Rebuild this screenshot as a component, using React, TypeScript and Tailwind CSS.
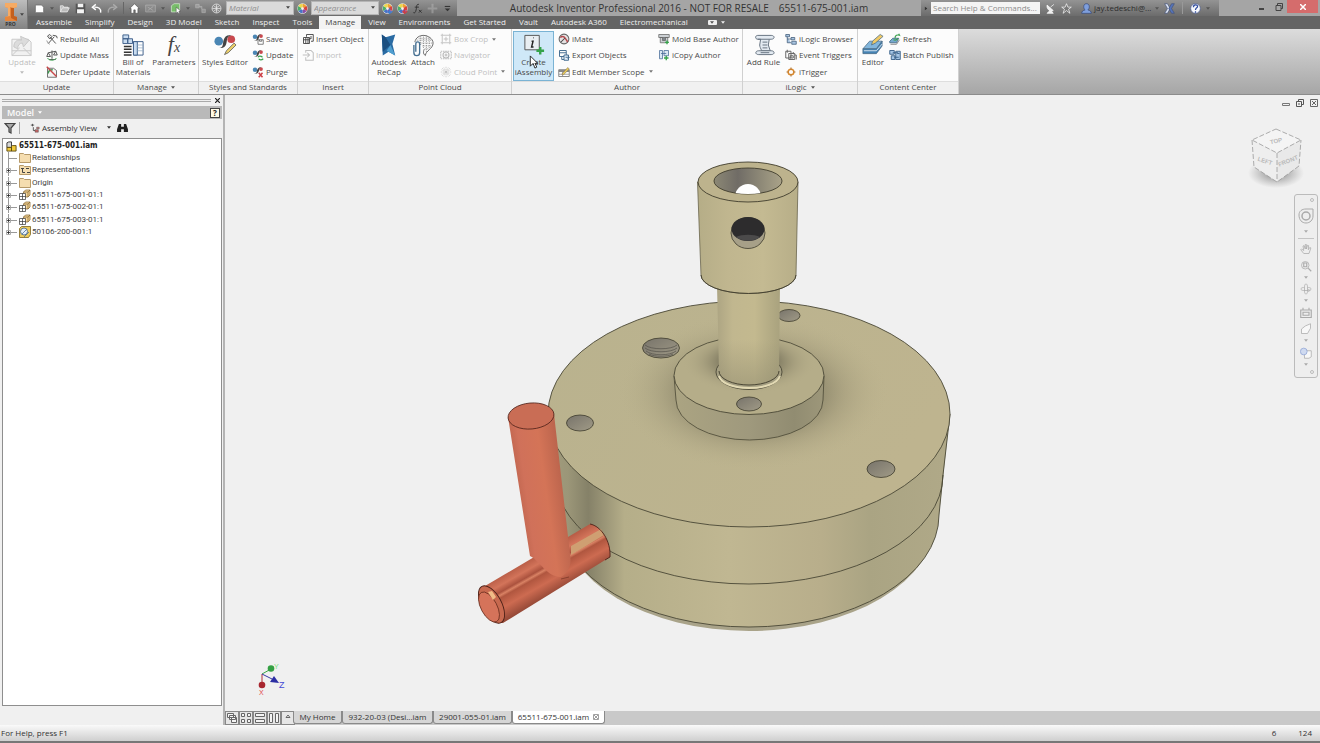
import type { ReactNode } from "react";
import clsx from "clsx";

const icons: Record<string, ReactNode> = {
  updateBig: (
    <g fill="#f1f1f1" stroke="#c8c8c8">
      <path d="M2 6h17l3 3v14H2z" />
      <path d="M2 18h20M2 23l8-8M22 23l-8-8" />
      <path d="M4 14c0-6 4-8 8-7l-1-4 9 4-6 7-1-4c-3 0-5 2-5 6z" fill="#dcdcdc" />
    </g>
  ),
  bom: (
    <g stroke="#3f5f8a" fill="#c9dcf0">
      <path d="M2 1.500h6v4H2zM2 5.500h5v5H2zM7 5.500h5v5H7z" />
      <path d="M13 8.500h10v14H13z" fill="#fff" />
      <path d="M13 8.500h4v14h-4z" />
      <path d="M3 13.500h8M3 16.500h8M3 19.500h8M3 22.500h8" stroke="#333" strokeWidth="1.500" />
      <path d="M17 12h6M17 15h6M17 18h6" stroke="#8aa5c0" strokeWidth=".7" />
    </g>
  ),
  styles: (
    <g>
      <circle cx="6" cy="8" r="4.500" fill="#4a86b4" />
      <circle cx="19" cy="6" r="4" fill="#c8494e" />
      <path d="M5 15c6 1 5-4 6-8s4-6 8-5c-5 1-4 4-5 8s-3 6-9 5z" fill="#444" />
      <path d="M12 22l2-4 8-8 2 2-8 8z" fill="#ecd06a" stroke="#555" strokeWidth=".8" />
    </g>
  ),
  recap: (
    <g>
      <path d="M5 1l4 3 10-3-3 10 3 12-7-4-6 4z" fill="#2a6ba3" />
      <path d="M5 1l4 3 5 8-8 7z" fill="#1b4f80" />
      <path d="M10 18l4-6 5 11z" fill="#4f9fd0" />
    </g>
  ),
  attach: (
    <g fill="none" stroke="#666">
      <path d="M4 9c1-5 5-7 9-7s10 3 10 8c0 6-8 8-8 13-3-2-2-5-1-7" />
      <path d="M6 7h16M8 5h12M9 10h13M12 13h9M15 16h4M10 3v9M13 2v14M16 2v17M19 4v12" strokeWidth=".7" strokeDasharray="1 1" />
      <path d="M3 12v8c0 4 6 4 6 0v-9c0-3-4-3-4 0v8" stroke="#456f91" strokeWidth="1.400" />
    </g>
  ),
  iassembly: (
    <g>
      <path d="M3 2h15v15H3z" fill="#e9eef2" stroke="#555" />
      <path d="M11.500 4.500h.5M10 8h1.500l-1.500 6h2" stroke="#222" strokeWidth="1.500" fill="none" />
      <path d="M19 14v8M15 18h8" stroke="#35a34a" strokeWidth="2.500" />
    </g>
  ),
  rule: (
    <g fill="#e3eaf1" stroke="#64717e">
      <path d="M6 2h14c4 0 4 4 0 4h-2l-1 6 2 6h-9c-1-3-2-4-2-6l1-6H6C3 6 3 2 6 2z" />
      <path d="M7 18h13c4 0 4 4 0 4H7c-4 0-4-4 0-4z" />
      <path d="M6 6h12M11 9h5M11 12h5M11 15h5M9 20h9" fill="none" />
    </g>
  ),
  editor: (
    <g stroke="#4c6c86" strokeWidth=".8">
      <path d="M2 16L9 8h13l-6 8z" fill="#83b6dc" />
      <path d="M2 16v5h14l6-8V8l-6 8z" fill="#4583b4" />
      <path d="M3 18h13l6-7" stroke="#fff" fill="none" />
      <path d="M11 12l1-4 8-7 3 2-8 7z" fill="#f0c964" />
    </g>
  ),
  rebuild: (
    <g fill="none" stroke="#555" strokeWidth="1.300">
      <path d="M3 14l8-9M13 14L5 5M2 4l3-2 3 3-3 3zM9 3l5 1 1 3" />
      <path d="M1 10a7 7 0 0 0 4 5" stroke="#999" />
    </g>
  ),
  mass: (
    <g fill="none" stroke="#555" strokeWidth="1.300">
      <path d="M8 2v11M3 5l10-2M1 10l2-5 3 5zM10 8l3-5 2 5zM4 14h9" />
      <path d="M2 12c2 4 9 4 12 0" stroke="#49a55a" />
    </g>
  ),
  defer: (
    <g fill="none" stroke="#666" strokeWidth="1.200">
      <path d="M2 3h8l4 3v9H2z" fill="#f4f4f4" />
      <path d="M3 10c0-4 3-5 6-5" stroke="#3e9a50" strokeWidth="1.800" />
      <path d="M1 1l13 13" stroke="#c9474a" strokeWidth="1.800" />
    </g>
  ),
  insert: <path d="M6 5V2h9v9h-3M2 6h8v8H2zM2 9h8M5 6v8M8 6v8M12 4v4l-2-1" fill="none" stroke="#444" strokeWidth="1.200" />,
  import: <path d="M5 5V2h7l3 3v10H5v-4M1 8h8M7 5l3 3-3 3" fill="none" stroke="#c0c0c0" strokeWidth="1.400" />,
  box: <path d="M3 3h10v10H3zM1 3h2V1M15 3h-2V1M3 15v-2H1M13 15v-2h2M8 5v6M5 8h6" fill="none" stroke="#c4c4c4" strokeWidth="1.300" />,
  navigator: (
    <g fill="none" stroke="#bbb" strokeWidth="1.500">
      <path d="M1 3h14v10H1z" strokeDasharray="2 1" />
      <circle cx="8" cy="8" r="4" />
      <path d="M8 6v4M6 8h4" />
    </g>
  ),
  cloud: <path d="M8 1v14M1 8h14M3 3l10 10M13 3L3 13M2 5l12 6M5 2l6 12M11 2L5 14M14 5L2 11" stroke="#c0c0c0" strokeDasharray="1.500 1" />,
  imate: (
    <g fill="none">
      <circle cx="8" cy="8" r="6.500" fill="#e5e2e2" stroke="#666" strokeWidth="1.400" />
      <path d="M3 6c5-4 7 2 10 6" stroke="#b5494e" strokeWidth="2" />
      <path d="M4 12l5-5" stroke="#444" strokeWidth="1.400" />
    </g>
  ),
  exportObj: (
    <g fill="none" stroke="#456d91" strokeWidth="1.300">
      <path d="M2 2h9v8H2zM2 5h9M5 10v4h4" />
      <path d="M8 8h6v7H8z" fill="#e6f0fa" />
      <path d="M10 11h5M13 9l2 2-2 2" />
    </g>
  ),
  scope: (
    <g>
      <path d="M1 5h14v9H1z" fill="#fff" stroke="#666" />
      <path d="M1 5h14v3H1z" fill="#888" />
      <path d="M1 11h14M6 8v6" stroke="#888" />
      <path d="M5 11l8-9 2 2-8 8z" fill="#edcf55" stroke="#765" strokeWidth=".7" />
    </g>
  ),
  mold: (
    <g fill="#ccd0d4" stroke="#666">
      <path d="M1 2h14v4H1zM3 6h10v7H3z" />
      <path d="M6 6v4h4V6" fill="#80868c" />
      <path d="M12 10v5M9.500 12.500h5" stroke="#35a34a" strokeWidth="1.800" />
    </g>
  ),
  icopy: (
    <g fill="#dbe8f5" stroke="#456996">
      <path d="M2 2h4v11H2zM8 2h6v7H8zM4 6h7" />
      <path d="M11 9v6M8 12h6" stroke="#35a34a" strokeWidth="1.800" />
    </g>
  ),
  browser: (
    <g fill="#a9c5e1" stroke="#3f5875">
      <path d="M1 2h5v3H1zM3 5v8h5M3 8h5" />
      <path d="M8 6h5v3H8zM9 11h6v4H9z" />
    </g>
  ),
  event: <path d="M1 3h7v9H1zM5 6h8v8H5zM3 1v4M11 4v3M7 9h4v3H7zM13 8h2v6" fill="none" stroke="#666" strokeWidth="1.300" />,
  trigger: (
    <g fill="none" stroke="#dc8a2e">
      <circle cx="8" cy="8" r="3.800" strokeWidth="2" />
      <path d="M8 2v3M8 11v3M2 8h3M11 8h3" stroke="#b07a3c" strokeWidth="1.500" />
    </g>
  ),
  refresh: (
    <g>
      <path d="M1 11l4-4h8l-3 6H1z" fill="#77a9ce" stroke="#3c617f" />
      <path d="M2 15h8l4-6" fill="none" stroke="#666" />
      <path d="M8 7c0-4 3-5 6-4l-1-2M6 9c3 1 5 0 6-2" fill="none" stroke="#39a04c" strokeWidth="1.500" />
    </g>
  ),
  batch: (
    <g fill="#a6c6e5" stroke="#375d86" strokeWidth="1.200">
      <path d="M1 2h6v5H1zM3 9h5v5H3zM9 3h6v11H9z" />
      <path d="M5 5h7M7 11h6M11 6h3" />
    </g>
  ),
};

const styleDots = (
  <g>
    <circle cx="4" cy="5" r="3" fill="#4a86b4" />
    <circle cx="12" cy="4" r="2.500" fill="#c8494e" />
    <path d="M3 10c4 0 3-3 4-5s3-4 5-3c-3 1-2 3-3 5s-2 4-6 3z" fill="#444" />
  </g>
);
icons.save = <g>{styleDots}<path d="M8 9h7v6H8zM10 9v2h3V9" fill="#fff" stroke="#555" /></g>;
icons.update = <g>{styleDots}<path d="M8 11c1-2 4-2 6 0M15 13c-2 2-5 2-6 0" fill="none" stroke="#36a04a" strokeWidth="1.500" /></g>;
icons.purge = <g>{styleDots}<path d="M9 9l5 6M14 9l-5 6" stroke="#cc3f46" strokeWidth="2" /></g>;

function Icon({ name, big }: { name: string; big?: boolean }) {
  return (
    <svg viewBox={big ? "0 0 25 24" : "0 0 16 16"} className={clsx("shrink-0", big ? "h-6 w-6" : "size-3")} aria-hidden="true">
      {icons[name]}
    </svg>
  );
}

function Caret({ className = "text-[#555]" }: { className?: string }) {
  return (
    <svg viewBox="0 0 6 4" className={clsx("h-[3px] w-1 shrink-0", className)} aria-hidden="true">
      <path d="M0 0h6L3 4z" fill="currentColor" />
    </svg>
  );
}

function BigButton({ icon, lines, className, children }: { icon?: string; lines: string[]; className: string; children?: ReactNode }) {
  return (
    <button className={clsx("flex h-[50px] shrink-0 flex-col items-center pt-0.5 leading-[10px] whitespace-nowrap", className)}>
      {icon ? <Icon name={icon} big /> : children}
      {lines.map((line) => (
        <span key={line}>{line}</span>
      ))}
      {icon === "updateBig" && <Caret className="mt-1 text-[#bbb]" />}
    </button>
  );
}

type Small = { icon: string; label: string; off?: boolean; menu?: boolean };

function SmallColumn({ items, className }: { items: Small[]; className?: string }) {
  return (
    <div className={clsx("grid h-[50px] shrink-0 grid-rows-3 items-center pb-px", className)}>
      {items.map((it) => (
        <button key={it.label} disabled={it.off} className={clsx("flex items-center gap-0.5 whitespace-nowrap", it.off && "text-[#c0c0c0]")}>
          <Icon name={it.icon} />
          {it.label}
          {it.menu && <Caret className="ml-0.5 text-[#777]" />}
        </button>
      ))}
    </div>
  );
}

function Panel({ title, menu, className, children }: { title: string; menu?: boolean; className: string; children: ReactNode }) {
  return (
    <section className={clsx("flex shrink-0 flex-col border-r border-[#d0d0d0] bg-[#fcfcfc]", className)}>
      <div className="flex h-[52px] pt-[2px]">{children}</div>
      <h2 className="flex h-[13px] items-center justify-center gap-1 border-t border-[#dedede] bg-[#f1f1f1] pb-0.5">
        {title}
        {menu && <Caret />}
      </h2>
    </section>
  );
}

function Ribbon() {
  return (
    <div className="flex h-[66px] shrink-0 overflow-hidden border-b border-[#8c8c8c] bg-linear-to-b from-[#dcdcdc] to-[#a6a6a6] text-[8px] text-[#4a4a4a]">
      <Panel title="Update" className="w-[114px]">
        <BigButton icon="updateBig" lines={["Update"]} className="w-11 text-[#bdbdbd]" />
        <SmallColumn items={[{ icon: "rebuild", label: "Rebuild All" }, { icon: "mass", label: "Update Mass" }, { icon: "defer", label: "Defer Update" }]} className="pl-0.5" />
      </Panel>
      <Panel title="Manage" menu className="w-[85px]">
        <BigButton icon="bom" lines={["Bill of", "Materials"]} className="w-[38px]" />
        <BigButton lines={["Parameters"]} className="w-[44px]">
          <span className="flex h-6 w-6 items-start justify-center font-['Liberation_Serif',serif] text-[22px] leading-[22px] text-[#444] italic" aria-hidden="true">
            <span>f</span>
            <span className="pt-2 text-[14px] leading-[14px]">x</span>
          </span>
        </BigButton>
      </Panel>
      <Panel title="Styles and Standards" className="w-[99px]">
        <BigButton icon="styles" lines={["Styles Editor"]} className="w-[52px]" />
        <SmallColumn items={[{ icon: "save", label: "Save" }, { icon: "update", label: "Update" }, { icon: "purge", label: "Purge" }]} className="pl-px" />
      </Panel>
      <Panel title="Insert" className="w-[71px]">
        <SmallColumn items={[{ icon: "insert", label: "Insert Object" }, { icon: "import", label: "Import", off: true }]} className="pl-1" />
      </Panel>
      <Panel title="Point Cloud" className="w-[143px]">
        <BigButton icon="recap" lines={["Autodesk", "ReCap"]} className="w-10" />
        <BigButton icon="attach" lines={["Attach"]} className="w-7" />
        <SmallColumn
          items={[{ icon: "box", label: "Box Crop", off: true, menu: true }, { icon: "navigator", label: "Navigator", off: true }, { icon: "cloud", label: "Cloud Point", off: true, menu: true }]}
          className="pl-[3px]"
        />
      </Panel>
      <Panel title="Author" className="w-[231px]">
        <div className="relative ml-px">
          <BigButton icon="iassembly" lines={["Create", "iAssembly"]} className="w-[41px] bg-[#cfe8f8] ring-1 ring-[#7ab3d4] ring-inset" />
          {/* pointer resting on the hovered button */}
          <svg viewBox="0 0 10 15" className="absolute top-6 left-4 h-3.5 w-2.5" aria-hidden="true">
            <path d="M1 1v11l3-3 2 5 2-1-2-4h3z" fill="#fff" stroke="#222" />
          </svg>
        </div>
        <SmallColumn items={[{ icon: "imate", label: "iMate" }, { icon: "exportObj", label: "Export Objects" }, { icon: "scope", label: "Edit Member Scope", menu: true }]} className="w-[103px] pl-1" />
        <SmallColumn items={[{ icon: "mold", label: "Mold Base Author" }, { icon: "icopy", label: "iCopy Author" }]} className="pl-px" />
      </Panel>
      <Panel title="iLogic" menu className="w-[115px]">
        <BigButton icon="rule" lines={["Add Rule"]} className="w-[41px]" />
        <SmallColumn items={[{ icon: "browser", label: "iLogic Browser" }, { icon: "event", label: "Event Triggers" }, { icon: "trigger", label: "iTrigger" }]} className="pl-px" />
      </Panel>
      <Panel title="Content Center" className="w-[101px]">
        <BigButton icon="editor" lines={["Editor"]} className="w-[30px]" />
        <SmallColumn items={[{ icon: "refresh", label: "Refresh" }, { icon: "batch", label: "Batch Publish" }]} className="pl-px" />
      </Panel>
    </div>
  );
}

function Quick({ label, children, dim }: { label: string; children: ReactNode; dim?: boolean }) {
  return (
    <button aria-label={label} className={clsx("shrink-0", dim && "opacity-45")}>
      <svg viewBox="0 0 16 16" className="size-[11px]" aria-hidden="true">{children}</svg>
    </button>
  );
}

function Wheel({ badge }: { badge?: string }) {
  return (
    <g>
      <circle cx="8" cy="8" r="7.500" fill="#eee" />
      <path d="M8 8V1a7 7 0 0 1 6 4z" fill="#f0a030" />
      <path d="M8 8l6-3.500a7 7 0 0 1 0 7z" fill="#d8433e" />
      <path d="M8 8l6 3.500A7 7 0 0 1 8 15z" fill="#8a4fa8" />
      <path d="M8 8v7a7 7 0 0 1-6-3.500z" fill="#4774c8" />
      <path d="M8 8l-6 3.500a7 7 0 0 1 0-7z" fill="#4cae6b" />
      <path d="M8 8L2 4.500A7 7 0 0 1 8 1z" fill="#ecd84d" />
      <circle cx="8" cy="8" r="2" fill="#f6f0f0" />
      {badge && <path d="M11 8v7M8 12l3 3 4-3" stroke={badge} strokeWidth="2" fill="none" />}
    </g>
  );
}

function Combo({ label }: { label: string }) {
  return (
    <div className="relative shrink-0">
      <select aria-label={label} className="block h-[14px] w-[68px] appearance-none border border-[#b5b5b5] bg-[#dadada] px-0.5 text-[8px] leading-3 text-[#8d8d8d] italic">
        <option>{label}</option>
      </select>
      <Caret className="pointer-events-none absolute top-[5px] right-1 text-[#444]" />
    </div>
  );
}

const tabs = ["Assemble", "Simplify", "Design", "3D Model", "Sketch", "Inspect", "Tools", "Manage", "View", "Environments", "Get Started", "Vault", "Autodesk A360", "Electromechanical"];

function Header() {
  return (
    <header className="flex h-[29px] shrink-0">
      <button aria-label="Application menu" className="flex w-7 shrink-0 items-center justify-center border-r border-[#777] bg-linear-to-b from-[#bdbdbd] to-[#838383]">
        <span className="flex flex-col items-center">
          <svg viewBox="0 0 12 18" className="h-[18px] w-3.5" aria-hidden="true">
            <path d="M0 0h12v4L9 5v8l3 1v4H0v-4l3-1V5L0 4z" fill="#e8863a" />
            <path d="M0 0h12v4L9 5 5 4v9l-5 1 3-1V5L0 4z" fill="#f5ab65" />
            <path d="M6 5h3v8l3 1v4l-6-3z" fill="#c4601e" />
          </svg>
          <span className="text-[5px] leading-[6px] font-bold text-[#333]">PRO</span>
        </span>
        <Caret className="ml-0.5 text-[#444]" />
      </button>
      <div className="flex min-w-0 flex-1 flex-col">
        <div className="flex h-4 shrink-0 items-center bg-[#a5a5a5]">
          <div className="flex h-4 w-[429px] shrink-0 items-center bg-linear-to-b from-[#949494] to-[#6c6c6c] pl-1.5">
            <div className="flex w-[188px] shrink-0 items-center justify-between">
              <Quick label="New"><path d="M2 3h9l3 3v8H2z" fill="#fff" stroke="#666" /></Quick>
              <Caret />
              <Quick label="Open"><path d="M2 13V4h4l1 2h6v2M2 13l3-6h10l-3 6z" fill="#bbb" stroke="#f2f2f2" /></Quick>
              <Quick label="Save"><path d="M1 1h14v14H1z" fill="#555" /><path d="M4 1h8v5H4zM3 9h10v6H3z" fill="#f4f4f4" /></Quick>
              <Quick label="Undo"><path d="M14 14c1-6-3-8-9-8M7 2L2 6l5 4" stroke="#fff" strokeWidth="2" fill="none" /></Quick>
              <Quick label="Redo" dim><path d="M2 14c-1-6 3-8 9-8M9 2l5 4-5 4" stroke="#ddd" strokeWidth="2" fill="none" /></Quick>
              <span className="h-3 w-px bg-[#666]" />
              <Quick label="Home"><path d="M1 8l7-7 7 7h-2v7h-4v-5H7v5H3V8z" fill="#fff" stroke="#555" /></Quick>
              <Quick label="Team Web" dim><path d="M1 3h14v10H1zM4 6l8 5M12 5l-8 6" stroke="#eee" fill="#999" /></Quick>
              <Caret />
              <Quick label="Select"><path d="M2 4l4-3h8v9l-3 3H2z" fill="#78bd6a" stroke="#d9efd5" /><path d="M9 6v9l2-2 2 3 1-1-1-3h3z" fill="#fff" stroke="#444" strokeWidth=".7" /></Quick>
              <Caret />
              <Quick label="Parts" dim><path d="M1 2h5v5H1zM10 9h5v5h-5zM6 5h4v4" fill="#bbb" stroke="#eee" /></Quick>
              <Quick label="Globe"><circle cx="8" cy="8" r="6.500" fill="#8a8a8a" stroke="#eee" /><path d="M2 8h12M8 2v12M4 4c3 3 5 3 8 0M4 12c3-3 5-3 8 0" stroke="#eee" fill="none" /></Quick>
            </div>
            <div className="ml-1 flex flex-1 items-center gap-[3px]">
              <Combo label="Material" />
              <Quick label="Appearance browser"><Wheel /></Quick>
              <Combo label="Appearance" />
              <div className="flex flex-1 items-center justify-between pr-1">
                <Quick label="Adjust"><Wheel badge="#3f7fd0" /></Quick>
                <Quick label="Clear"><Wheel badge="#cc3f46" /></Quick>
                <Quick label="Formula"><path d="M10 2C6 1 7 6 6 10s-2 5-4 4M4 6h6M10 10l4 4M14 10l-4 4" stroke="#333" strokeWidth="1.400" fill="none" /></Quick>
                <Quick label="Measure" dim><path d="M8 1v14M1 8h14" stroke="#bbb" strokeWidth="3" /></Quick>
                <Quick label="Customize"><path d="M4 5h8" stroke="#333" strokeWidth="1.500" /><path d="M4 8h8l-4 4z" fill="#333" /></Quick>
              </div>
            </div>
          </div>
          <h1 className="flex min-w-0 flex-1 justify-center gap-2.5 overflow-hidden text-[10px] leading-4 whitespace-nowrap text-[#333]">
            <span>Autodesk Inventor Professional 2016 - NOT FOR RESALE</span>
            <span>65511-675-001.iam</span>
          </h1>
          <div className="flex h-4 w-[298px] shrink-0 items-center gap-[5px] bg-linear-to-b from-[#949494] to-[#6c6c6c] pl-[3px]">
            <Caret className="-rotate-90 text-[#333]" />
            <input aria-label="Search Help & Commands" placeholder="Search Help & Commands..." className="-ml-0.5 h-3 w-[109px] bg-[#f4f4f4] px-0.5 text-[8px] text-[#555] placeholder:text-[#8d8d8d]" />
            <Quick label="Search"><path d="M3 15h9l-4-5zM3 3l9 8C6 13 2 8 3 3zM8 6l5-4" fill="#eee" stroke="#fff" /></Quick>
            <Quick label="Favorites"><path d="M8 1l2 5h5l-4 3 2 6-5-4-5 4 2-6-4-3h5z" fill="#777" stroke="#fff" /></Quick>
            <button className="ml-1 flex items-center gap-0.5 text-[8px] whitespace-nowrap text-[#2d2d2d]">
              <svg viewBox="0 0 16 16" className="size-[11px]" aria-hidden="true"><path d="M8 1c5 0 5 7 2 9 3 1 5 2 5 5H1c0-3 2-4 5-5C3 8 3 1 8 1z" fill="#7f9fdc" stroke="#33477c" /></svg>
              jay.tedeschi@...
              <Caret className="ml-0.5 text-[#555]" />
            </button>
            <Quick label="Exchange Apps"><path d="M1 1h4l4 7-4 7H1l4-7z" fill="#dbe3f2" stroke="#46547c" /><path d="M15 1h-4L7 8l4 7h4l-4-7z" fill="#5674ba" stroke="#46547c" /></Quick>
            <span className="mx-0.5 h-3 w-px bg-[#999]" />
            <Quick label="Help"><circle cx="8" cy="8" r="7" fill="#f6f8fc" stroke="#4d5f94" /><path d="M5 6c0-4 6-4 6-1 0 2-3 2-3 5M8 12v2" stroke="#2f4a9c" strokeWidth="1.800" fill="none" /></Quick>
            <Caret />
          </div>
          <div className="flex h-4 w-[101px] shrink-0 items-start justify-end pr-0.5">
            <button aria-label="Minimize" className="h-4 w-[17px]"><span className="mx-auto mt-0.5 block h-0.5 w-[5px] bg-[#444]" /></button>
            <button aria-label="Restore" className="flex h-[13px] w-[17px] items-center justify-center">
              <svg viewBox="0 0 8 8" className="size-2" aria-hidden="true"><path d="M1 2.500h5v5H1zM2.500 2V.5h5v5H6" fill="none" stroke="#444" /></svg>
            </button>
            <button aria-label="Close" className="flex h-[13px] w-[31px] items-center justify-center bg-[#d56c6c]">
              <svg viewBox="0 0 6 6" className="size-1.5" aria-hidden="true"><path d="M0 0l6 6M6 0L0 6" stroke="#fff" strokeWidth="1.500" /></svg>
            </button>
          </div>
        </div>
        <nav className="flex h-[13px] items-stretch gap-px bg-[#646464] pl-0.5 text-[8px] leading-3 text-[#efefef]">
          {tabs.map((tab) => (
            <button key={tab} className={clsx("px-1.5 pb-px whitespace-nowrap", tab === "Manage" && "bg-[#f3f3f3] text-[#444]")}>{tab}</button>
          ))}
          <button aria-label="Ribbon display" className="ml-[13px] flex items-center gap-1">
            <span className="flex h-[5px] w-[9px] items-center justify-center rounded-[1px] bg-[#eee]"><Caret className="text-[#555]" /></span>
            <Caret className="text-[#eee]" />
          </button>
        </nav>
      </div>
    </header>
  );
}

const nodes = [
  { label: "Relationships", kind: "folder", leaf: true },
  { label: "Representations", kind: "reps" },
  { label: "Origin", kind: "folder" },
  { label: "65511-675-001-01:1", kind: "part" },
  { label: "65511-675-002-01:1", kind: "part" },
  { label: "65511-675-003-01:1", kind: "part" },
  { label: "50106-200-001:1", kind: "sub" },
];

function NodeIcon({ kind }: { kind: string }) {
  return (
    <svg viewBox="0 0 12 12" className="size-3 shrink-0" aria-hidden="true">
      {(kind === "folder" || kind === "reps") && <path d="M.5 1.500h4l1 1h6v8H.5z" fill="#f5ddb0" stroke="#b79a6a" />}
      {kind === "reps" && <path d="M2 4.500h3M3.500 4.500v4H6M7 4.500h3M8 8.500h3" stroke="#444" fill="none" />}
      {kind === "part" && (
        <g strokeWidth=".7">
          <path d="M4.500 3l2-2H11v5L9 8H4.500z" fill="#f6d79a" stroke="#7d5d2a" />
          <path d="M4.500 3H9l2-2M9 3v5" fill="none" stroke="#7d5d2a" />
          <path d="M.5 4.500h6v6h-6z" fill="#fff" stroke="#333" />
          <path d="M3.500 4.500v6M.5 7.500h6" stroke="#333" />
        </g>
      )}
      {kind === "sub" && (
        <g strokeWidth=".8">
          <path d="M.5 2.500l2-2h9v8l-2 3h-9z" fill="#f0cd5c" stroke="#7a6321" />
          <circle cx="5" cy="5.500" r="3.500" fill="#e6eff8" stroke="#3e5f86" />
          <path d="M3 8l5-5M5 11l5-5" stroke="#4a6e98" />
        </g>
      )}
    </svg>
  );
}

function ModelBrowser() {
  return (
    <aside className="flex w-[225px] shrink-0 flex-col border-r-2 border-[#b4b4b4] bg-[#f0f0f0] pt-0.5 pr-px pl-0.5">
      <div className="flex h-[9px] shrink-0 items-start gap-1 pt-px pr-0.5">
        <span className="mt-px h-[3px] flex-1 border-y border-[#aaa]" />
        <button aria-label="Close panel">
          <svg viewBox="0 0 5 5" className="block size-[5px]" aria-hidden="true"><path d="M0 0l5 5M5 0L0 5" stroke="#222" strokeWidth="1.200" /></svg>
        </button>
      </div>
      <div className="flex h-[13px] shrink-0 items-center justify-between bg-[#b9b9b9] pr-0.5 pl-[5px]">
        <h2 className="flex items-center gap-1 text-[9px] leading-3 font-semibold text-[#fbfbfb]">Model <Caret className="text-white" /></h2>
        <button aria-label="Help" className="flex size-2.5 items-center justify-center border border-[#444] bg-[#fffbe8] text-[8px] leading-none font-bold text-[#222]">?</button>
      </div>
      <div className="flex h-[19px] shrink-0 items-center pb-0.5 pl-0.5 text-[8px] text-[#333]">
        <button aria-label="Filter"><svg viewBox="0 0 12 12" className="size-3" aria-hidden="true"><path d="M1 1.500h10L7 6v5l-2-1V6z" fill="#aaa" stroke="#444" strokeWidth="1.200" /></svg></button>
        <span className="mr-2.5 ml-[3px] h-3 w-px bg-[#aaa]" />
        <button className="flex items-center gap-0.5">
          <svg viewBox="0 0 12 12" className="size-2.5" aria-hidden="true"><path d="M1 2.500h4M3 1v3M4 5v4h4" stroke="#444" fill="none" /><path d="M8 5h3v2H8zM6 8h4v3H6z" fill="#c96464" stroke="#555" strokeWidth=".6" /></svg>
          Assembly View
          <Caret className="ml-2" />
        </button>
        <button aria-label="Find" className="ml-1.5">
          <svg viewBox="0 0 12 11" className="h-2.5 w-[11px]" aria-hidden="true"><path d="M2 1h2.500v3h3V1H10l2 6v3H7.500V7h-3v3H0V7z" fill="#222" /></svg>
        </button>
      </div>
      <div className="mb-[19px] flex-1 border border-[#8e8e8e] bg-white pt-px pl-[3px] font-[Roboto,sans-serif] text-[8px] text-[#444]">
        <p className="flex h-3 items-center gap-0.5 font-['DejaVu_Sans_Condensed','DejaVu_Sans',sans-serif] font-bold text-[#222]">
          <svg viewBox="0 0 12 12" className="size-[11px]" aria-hidden="true">
            <path d="M1 2l2-1h3v6H1z" fill="#d9d9d9" stroke="#333" />
            <path d="M1 7h5v4H1zM6 6l1-1h4v6H6z" fill="#f0c93b" stroke="#5d4a12" />
          </svg>
          65511-675-001.iam
        </p>
        <ul className="flex h-[86px] flex-col justify-between">
          {nodes.map((n, i) => (
            <li key={n.label} className="flex h-3 items-center">
              <svg viewBox="0 0 12 12" className="mr-px size-3 shrink-0" aria-hidden="true">
                <path d={i === nodes.length - 1 ? "M2.500 0v6.500H11" : "M2.500 0v12M2.500 6.500H11"} stroke="#999" fill="none" />
                {!n.leaf && <path d="M.5 4.500h4v4h-4z" fill="#fff" stroke="#999" strokeWidth=".8" />}
                {!n.leaf && <path d="M1 6.500h3M2.500 5v3" stroke="#222" strokeWidth=".8" />}
              </svg>
              <NodeIcon kind={n.kind} />
              <span className="ml-px">{n.label}</span>
            </li>
          ))}
        </ul>
      </div>
    </aside>
  );
}

function Assembly() {
  return (
    <svg viewBox="225 95 1095 616" preserveAspectRatio="xMidYMid meet" className="h-full w-full" role="img" aria-label="65511-675-001 assembly">
      <defs>
        <linearGradient id="side" x1="0" x2="1">
          <stop offset="0" stopColor="#a39d7e" />
          <stop offset=".05" stopColor="#9b9678" />
          <stop offset=".1" stopColor="#858168" />
          <stop offset=".19" stopColor="#b5ae89" />
          <stop offset=".45" stopColor="#c0b792" />
          <stop offset=".68" stopColor="#b8ae8b" />
          <stop offset=".8" stopColor="#aaa483" />
          <stop offset="1" stopColor="#b0a988" />
        </linearGradient>
        <linearGradient id="face" x1="0" x2="1" y1="0" y2=".4">
          <stop offset="0" stopColor="#b9b28e" />
          <stop offset="1" stopColor="#beb48f" />
        </linearGradient>
        <radialGradient id="shade">
          <stop offset=".45" stopColor="#6b6752" stopOpacity=".6" />
          <stop offset=".68" stopColor="#857f65" stopOpacity=".28" />
          <stop offset="1" stopColor="#b8b08b" stopOpacity="0" />
        </radialGradient>
        <linearGradient id="shaft" x1="0" x2="1">
          <stop offset="0" stopColor="#ada583" />
          <stop offset=".25" stopColor="#c1b78f" />
          <stop offset=".6" stopColor="#c3b98f" />
          <stop offset="1" stopColor="#a9a27e" />
        </linearGradient>
        <linearGradient id="shaftFoot" x1="0" x2="0" y1="0" y2="1">
          <stop offset=".55" stopColor="#8f8a6e" stopOpacity="0" />
          <stop offset="1" stopColor="#8f8a6e" stopOpacity=".5" />
        </linearGradient>
        <linearGradient id="cap" x1="0" x2="1">
          <stop offset="0" stopColor="#b5ad87" />
          <stop offset=".3" stopColor="#c0b68f" />
          <stop offset=".65" stopColor="#c4ba92" />
          <stop offset="1" stopColor="#b7ae88" />
        </linearGradient>
        <linearGradient id="boss" x1="0" x2="1">
          <stop offset="0" stopColor="#aba482" />
          <stop offset=".5" stopColor="#9f997d" />
          <stop offset=".8" stopColor="#918c71" />
          <stop offset="1" stopColor="#9d977a" />
        </linearGradient>
        <linearGradient id="bore" x1="0" x2="1">
          <stop offset="0" stopColor="#8c8875" />
          <stop offset=".35" stopColor="#706c66" />
          <stop offset=".7" stopColor="#8f8a78" />
          <stop offset="1" stopColor="#aaa389" />
        </linearGradient>
        <linearGradient id="hole" x1="0" x2="1" y1="0" y2="1">
          <stop offset="0" stopColor="#77736a" />
          <stop offset="1" stopColor="#a19b87" />
        </linearGradient>
        <linearGradient id="rod" gradientUnits="userSpaceOnUse" x1="516" y1="490" x2="565" y2="483">
          <stop offset="0" stopColor="#c0664f" />
          <stop offset=".2" stopColor="#d0715a" />
          <stop offset=".6" stopColor="#d47457" />
          <stop offset="1" stopColor="#b9634c" />
        </linearGradient>
        <linearGradient id="pin" gradientUnits="userSpaceOnUse" x1="535" y1="555" x2="556" y2="592">
          <stop offset="0" stopColor="#b55a44" />
          <stop offset=".22" stopColor="#d3745a" />
          <stop offset=".36" stopColor="#ab523e" />
          <stop offset=".42" stopColor="#d98264" />
          <stop offset=".48" stopColor="#b0563f" />
          <stop offset=".7" stopColor="#cd6b51" />
          <stop offset="1" stopColor="#954937" />
        </linearGradient>
        <clipPath id="topClip"><ellipse cx="749" cy="414" rx="201" ry="113" /></clipPath>
        <clipPath id="bossClip"><ellipse cx="749" cy="375.500" rx="75" ry="39" /></clipPath>
        <clipPath id="boreClip"><ellipse cx="748" cy="181" rx="34" ry="13" /></clipPath>
      </defs>

      {/* main disc */}
      <ellipse cx="749" cy="519" rx="187" ry="112" fill="#a9a389" />
      <path d="M548 414L555 480L559 515A190 112 0 0 0 939 515L943 478L950 414z" fill="url(#side)" />
      <path d="M555 475A194 109 0 0 0 943 475M559 515A190 112 0 0 0 939 515L943 475L950 414" fill="none" stroke="#4a4735" strokeWidth=".9" />
      <ellipse cx="749" cy="414" rx="201" ry="113" fill="url(#face)" stroke="#4a4735" strokeWidth=".9" />
      <g clipPath="url(#topClip)">
        <ellipse cx="753" cy="392" rx="135" ry="78" fill="url(#shade)" />
      </g>
      <g fill="url(#hole)" stroke="#3f3c2d" strokeWidth=".8">
        <ellipse cx="661" cy="348" rx="18.500" ry="10" />
        <ellipse cx="789" cy="315.500" rx="11" ry="6" />
        <ellipse cx="580" cy="423" rx="13.500" ry="8" />
        <ellipse cx="881" cy="469" rx="14" ry="8.500" />
      </g>
      <path d="M645 345c6 5 26 5 32 0M645 348c6 5 26 5 32 0M646 351c6 5 24 5 30 0M649 354c5 3 19 3 24 0" fill="none" stroke="#55524a" strokeWidth=".7" />

      {/* boss */}
      <path d="M674 376L676 400A73.500 40 0 0 0 823 400L824 376z" fill="url(#boss)" stroke="#4a4735" strokeWidth=".8" />
      <ellipse cx="749" cy="375.500" rx="75" ry="39" fill="#b5ad89" stroke="#4a4735" strokeWidth=".9" />
      <g clipPath="url(#bossClip)">
        <ellipse cx="749" cy="362" rx="68" ry="32" fill="url(#shade)" />
      </g>
      <ellipse cx="749" cy="404" rx="12.500" ry="7" fill="url(#hole)" stroke="#3f3c2d" strokeWidth=".8" />
      <ellipse cx="749" cy="372" rx="33" ry="17.500" fill="#a59f82" stroke="#3f3c2d" strokeWidth=".8" />
      <path d="M719 376c4 16 56 16 61 0" fill="none" stroke="#e3dab4" strokeWidth="2" />
      <path d="M717 285L719 371A30 14 0 0 0 779 371L780 285z" fill="url(#shaft)" />
      <path d="M717 285L719 371A30 14 0 0 0 779 371L780 285z" fill="url(#shaftFoot)" />
      <path d="M719 371A30 14 0 0 0 779 371" fill="none" stroke="#3f3c2d" strokeWidth=".9" />

      {/* collar */}
      <path d="M697.500 182L701 275A47.500 18.500 0 0 0 796 275L798 182z" fill="url(#cap)" stroke="#6a654c" strokeWidth=".8" />
      <path d="M701 275A47.500 18.500 0 0 0 796 275" fill="none" stroke="#3f3c2d" strokeWidth=".9" />
      <ellipse cx="748" cy="182" rx="50" ry="20" fill="#bdb38d" stroke="#3f3c2d" strokeWidth=".9" />
      <ellipse cx="748" cy="181" rx="34" ry="13" fill="url(#bore)" stroke="#3f3c2d" strokeWidth=".9" />
      <circle cx="748" cy="197" r="13" fill="#fff" clipPath="url(#boreClip)" />
      <ellipse cx="748" cy="233" rx="17" ry="15.500" fill="#a7a088" stroke="#3f3c2d" strokeWidth=".8" />
      <ellipse cx="748" cy="229" rx="16.500" ry="12" fill="#2d2c2d" />
      <path d="M736 237c6-3 18-3 24 0-6 5-18 5-24 0z" fill="#4b4a4a" />

      {/* handle */}
      <path d="M478 594L485 586L590 524C601 526 611 541 610 557L503 623C490 624 479 610 478 594z" fill="url(#pin)" />
      <path d="M571 546L601 529L604 535L571 555z" fill="#cf9f72" />
      <path d="M590 524C601 526 611 541 610 557L605 560" fill="none" stroke="#4d2118" strokeWidth=".9" />
      <path d="M508 417L530 556C540 561 547 577 561 577C569 572 572 564 570 554L554 414z" fill="url(#rod)" />
      <ellipse cx="531" cy="416" rx="23" ry="13" transform="rotate(-5 531 416)" fill="#c96d55" stroke="#4d2118" strokeWidth=".8" />
      <ellipse cx="491.500" cy="604.500" rx="10" ry="20.500" transform="rotate(-28 491.500 604.500)" fill="#c7694f" stroke="#4d2118" strokeWidth=".9" />
      <ellipse cx="489" cy="607" rx="8" ry="16.500" transform="rotate(-28 489 607)" fill="#d5735a" stroke="#6d3021" strokeWidth=".8" />
      <path d="M488 592l4-1 4 6-3 3z" fill="#f1bd87" />
      <path d="M561 579l8-2" stroke="#7d3828" strokeWidth=".8" />
    </svg>
  );
}

function Triad() {
  return (
    <svg viewBox="0 0 32 36" className="absolute bottom-3.5 left-8 h-9 w-8 font-['Liberation_Sans',sans-serif]" aria-label="Axis indicator">
      <path d="M5 13L14 8" stroke="#3aa545" />
      <path d="M5 13v11" stroke="#b03038" />
      <path d="M5 13l12 6" stroke="#3538a5" />
      <circle cx="14" cy="7.500" r="3.300" fill="#34a043" />
      <circle cx="5" cy="24" r="3.300" fill="#a8262f" />
      <path d="M13 21l4-6 5 7z" fill="#2c2ea3" />
      <text x="17" y="8" fontSize="7" fill="#7be27f">Y</text>
      <text x="2" y="34" fontSize="7" fill="#e0484c">X</text>
      <text x="22" y="27" fontSize="9" fill="#4649d6">Z</text>
    </svg>
  );
}

function ViewCube() {
  return (
    <svg viewBox="0 0 60 64" className="absolute top-[30px] right-[15px] h-16 w-[60px] font-['Liberation_Sans',sans-serif]" aria-label="View cube">
      <defs><radialGradient id="cubeShade"><stop offset=".3" stopColor="#888" stopOpacity=".7" /><stop offset="1" stopColor="#999" stopOpacity="0" /></radialGradient></defs>
      <ellipse cx="31" cy="48" rx="28" ry="15" fill="url(#cubeShade)" />
      <path d="M31 4L56 15L32 28L7 15z" fill="#f4f4f4" />
      <path d="M7 15L32 28V57L9 42z" fill="#eeeeee" />
      <path d="M56 15L32 28V57L54 41z" fill="#e9e9e9" />
      <path d="M31 4L56 15L32 28L7 15zM7 15L9 42L32 57L54 41L56 15M32 28V57" fill="none" stroke="#999" strokeWidth=".8" strokeDasharray="5 2" />
      <g fill="#b9b9b9" fontWeight="bold" textAnchor="middle" fontSize="6">
        <text x="31" y="18" transform="rotate(-12 31 16)">TOP</text>
        <text x="20" y="38" transform="rotate(18 20 36)">LEFT</text>
        <text x="43" y="38" transform="rotate(-22 43 36)">FRONT</text>
      </g>
    </svg>
  );
}

function NavButton({ label, menu, children }: { label: string; menu?: boolean; children: ReactNode }) {
  return (
    <button aria-label={label} className="flex flex-col items-center gap-1">
      <svg viewBox="0 0 16 16" className="size-3" fill="none" stroke="#aaa" aria-hidden="true">{children}</svg>
      {menu && <Caret className="text-[#aaa]" />}
    </button>
  );
}

function NavBar() {
  return (
    <div className="absolute top-[99px] right-0.5 flex h-[184px] w-6 flex-col items-center justify-between rounded-[3px] border border-[#bbb] bg-[#eeeeee] py-[3px]">
      <span className="ml-3 size-1 rounded-full border border-[#bbb]" />
      <button aria-label="Full navigation wheel" className="mt-0.5 flex flex-col items-center gap-1.5">
        <svg viewBox="0 0 16 16" className="size-4" fill="none" stroke="#aaa" aria-hidden="true"><path d="M1 7c0-4 3-6 7-6h7v7c0 4-3 7-7 7s-7-3-7-8z" /><circle cx="8" cy="8" r="4" strokeWidth="1.500" /></svg>
        <Caret className="text-[#aaa]" />
      </button>
      <span className="h-px w-4 bg-[#c4c4c4]" />
      <NavButton label="Pan"><path d="M5 14L1 9l1-1 3 2-1-6 1.500-.5L7 8V2h1.500v6L10 3l1.500.5L11 9l2-3 1.500.5L12 14z" /></NavButton>
      <NavButton label="Zoom" menu><circle cx="7" cy="7" r="5" /><path d="M11 11l4 4M5 4h4v5H5z" strokeWidth="1.500" /></NavButton>
      <NavButton label="Orbit" menu><path d="M6 5c0-5 4-5 4 0v6c0 5-4 5-4 0zM5 6C0 6 0 10 5 10h6c5 0 5-4 0-4M11 12l2-2-2-2" /></NavButton>
      <NavButton label="Look at"><path d="M1 4h14v10H1zM4 7h8v4H4zM4 1v3M12 1v3" strokeWidth="1.500" /></NavButton>
      <NavButton label="View face" menu><path d="M2 8l5-4 7-3v6l-4 7H2z" fill="#f8f8f8" /></NavButton>
      <NavButton label="Visual style" menu><path d="M8 5h7v8l-3 2H6V9z" fill="#f8f8f8" /><circle cx="5" cy="6" r="4.500" fill="#cfdaf0" stroke="#8ea3d4" /></NavButton>
      <span className="ml-3 size-1 rounded-full border border-[#bbb]" />
    </div>
  );
}

const arrange = [
  { label: "Cascade", d: "M1.500 1.500h6v4h-6zM3.500 3.500h6v4h-6zM5.500 5.500h5v5h-5z" },
  { label: "Arrange", d: "M1.500 1.500h3v3h-3zM7.500 1.500h3v3h-3zM1.500 7.500h3v3h-3zM7.500 7.500h3v3h-3z" },
  { label: "Tile Horizontally", d: "M1.500 1.500h9v3h-9zM1.500 7.500h9v3h-9z" },
  { label: "Tile Vertically", d: "M1.500 1.500h3v9h-3zM7.500 1.500h3v9h-3z" },
  { label: "More documents", d: "M4 5.500h4L6 3z" },
];

const docs = [
  { name: "My Home", w: "w-[49px]" },
  { name: "932-20-03 (Desi...iam", w: "w-[91px]" },
  { name: "29001-055-01.iam", w: "w-[79px]" },
  { name: "65511-675-001.iam", w: "w-[93px]", active: true },
];

export default function App() {
  return (
    <div className="flex h-screen flex-col overflow-hidden bg-[#f0f0f0] font-['Open_Sans','Noto_Sans',sans-serif]">
      <Header />
      <Ribbon />
      <div className="flex min-h-0 flex-1">
        <ModelBrowser />
        <main className="flex min-w-0 flex-1 flex-col">
          <div className="relative min-h-0 flex-1 bg-[#f0f0f0]">
            <Assembly />
            <div className="absolute top-1 right-0.5 flex gap-1.5">
              <button aria-label="Minimize document"><svg viewBox="0 0 8 8" className="size-2" aria-hidden="true"><path d="M.5 4.500h7v2h-7z" fill="none" stroke="#777" /></svg></button>
              <button aria-label="Restore document"><svg viewBox="0 0 8 8" className="size-2" aria-hidden="true"><path d="M.5 2.500h5v5h-5zM2.500 2V.5h5v5H6M3 4v2" fill="none" stroke="#555" /></svg></button>
              <button aria-label="Close document"><svg viewBox="0 0 8 8" className="size-2" aria-hidden="true"><path d="M.5.5h7v7h-7zM2 2l4 4M6 2L2 6" fill="none" stroke="#666" /></svg></button>
            </div>
            <ViewCube />
            <NavBar />
            <Triad />
          </div>
          <div className="flex h-[14px] shrink-0 bg-[#c9c9c9] text-[8px] text-[#333]">
            <div className="flex w-[68px] shrink-0">
              {arrange.map((a) => (
                <button key={a.label} aria-label={a.label} className="flex flex-1 items-center justify-center border border-[#888] bg-[#e6e6e6]">
                  <svg viewBox="0 0 12 12" className="size-3 shrink-0" aria-hidden="true"><path d={a.d} fill="#f4f4f4" stroke="#666" /></svg>
                </button>
              ))}
            </div>
            {docs.map((d) => (
              <button key={d.name} className={clsx("flex h-[13px] shrink-0 items-center justify-center gap-1 rounded-b-[3px] border border-t-0 border-[#8a8a8a] whitespace-nowrap", d.w, d.active ? "bg-white" : "bg-[#d6d6d6]")}>
                {d.name}
                {d.active && <svg viewBox="0 0 6 6" className="size-1.5" aria-hidden="true"><path d="M.5.5h5v5h-5zM1 1l4 4M5 1L1 5" fill="none" stroke="#888" strokeWidth=".8" /></svg>}
              </button>
            ))}
          </div>
        </main>
      </div>
      <footer className="flex h-[18px] shrink-0 items-center justify-between border-b-2 border-[#777] bg-linear-to-b from-[#fafafa] to-[#cfcfcf] pr-2 pl-px text-[8px] text-[#333]">
        <span>For Help, press F1</span>
        <span className="flex gap-[22px]"><span>6</span><span>124</span></span>
      </footer>
    </div>
  );
}
